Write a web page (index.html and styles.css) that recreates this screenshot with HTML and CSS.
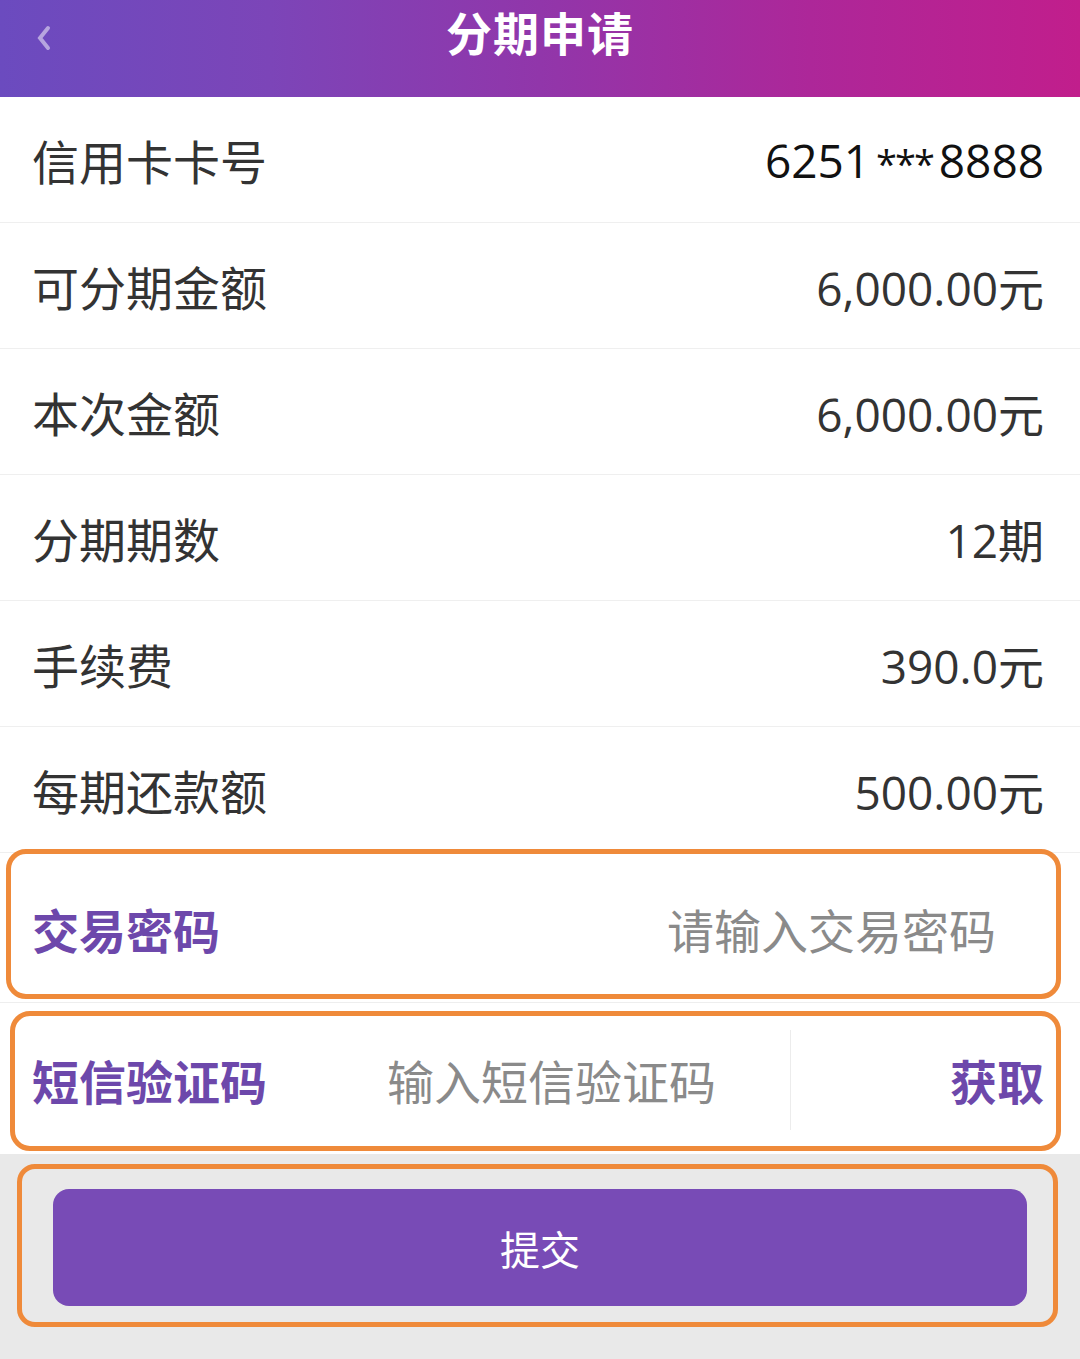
FILE: index.html
```html
<!DOCTYPE html>
<html lang="zh-CN">
<head>
<meta charset="utf-8">
<title>分期申请</title>
<link rel="stylesheet" href="styles.css">
</head>
<body>
<div class="page">
  <header class="topbar">
    <svg class="back" width="40" height="50" viewBox="0 0 40 50" aria-hidden="true">
      <path d="M22 22 L14 32 L22 42" fill="none" stroke="#ffffff" stroke-width="4" stroke-linecap="round" opacity="0.5"/>
    </svg>
    <h1 class="title">分期申请</h1>
  </header>

  <div class="row"><span class="label">信用卡卡号</span><span class="value dark">6251 <span class="stars">***</span> 8888</span></div>
  <div class="row"><span class="label">可分期金额</span><span class="value">6,000.00元</span></div>
  <div class="row"><span class="label">本次金额</span><span class="value">6,000.00元</span></div>
  <div class="row"><span class="label">分期期数</span><span class="value">12期</span></div>
  <div class="row"><span class="label">手续费</span><span class="value">390.0元</span></div>
  <div class="row"><span class="label">每期还款额</span><span class="value">500.00元</span></div>

  <div class="field pwd">
    <span class="flabel">交易密码</span>
    <span class="placeholder pwd-ph">请输入交易密码</span>
    <div class="mark mark-pwd"></div>
  </div>

  <div class="field sms">
    <span class="flabel">短信验证码</span>
    <span class="placeholder sms-ph">输入短信验证码</span>
    <span class="divider"></span>
    <span class="get">获取</span>
    <div class="mark mark-sms"></div>
  </div>

  <div class="footer">
    <button class="submit">提交</button>
    <div class="mark mark-btn"></div>
  </div>
</div>
</body>
</html>
```

FILE: styles.css
```css
html, body {
  margin: 0;
  padding: 0;
}
body {
  background: #e9e9e9;
  font-family: "Open Sans", "Noto Sans CJK SC", sans-serif;
}
.page {
  width: 1080px;
  height: 1359px;
  display: flex;
  flex-direction: column;
  background: #e9e9e9;
  overflow: hidden;
}
.topbar {
  position: relative;
  height: 97px;
  flex: none;
  background: linear-gradient(90deg, #6b4bbf 0%, #7c45b8 25%, #9136aa 50%, #ad2799 75%, #c11e8c 100%);
  display: flex;
  justify-content: center;
  align-items: flex-start;
}
.back {
  position: absolute;
  left: 26px;
  top: 6px;
}
.title {
  margin: 0;
  padding-top: 7px;
  font-family: "Noto Sans CJK SC", sans-serif;
  font-size: 46px;
  line-height: 48px;
  font-weight: 700;
  color: #ffffff;
  letter-spacing: 1px;
}
.row {
  height: 125px;
  flex: none;
  background: #ffffff;
  border-bottom: 1px solid #efefef;
  display: flex;
  justify-content: space-between;
  align-items: center;
  padding: 0 36px 0 32px;
}
.label {
  font-family: "Noto Sans CJK SC", sans-serif;
  font-size: 47px;
  color: #333333;
}
.value {
  font-family: "Open Sans", "Noto Sans CJK SC", sans-serif;
  font-size: 46px;
  color: #333333;
}
.value.dark {
  color: #111111;
  word-spacing: -6px;
}
.stars {
  font-size: 38px;
  letter-spacing: -2px;
}
.field {
  position: relative;
  flex: none;
  background: #ffffff;
  display: flex;
  align-items: center;
  padding: 0 36px 0 32px;
  font-family: "Noto Sans CJK SC", sans-serif;
  box-sizing: border-box;
}
.pwd {
  height: 150px;
  border-bottom: 1px solid #eeeeee;
  padding-top: 2px;
}
.sms {
  height: 151px;
  padding-top: 2px;
}
.flabel {
  font-size: 47px;
  font-weight: 700;
  color: #6d48ab;
}
.placeholder {
  font-size: 47px;
  color: #8a8a8a;
}
.pwd-ph {
  margin-left: auto;
  margin-right: 48px;
}
.sms-ph {
  margin-left: 120px;
}
.divider {
  width: 1px;
  height: 100px;
  background: #ececec;
  margin-left: 74px;
}
.get {
  margin-left: auto;
  font-size: 47px;
  font-weight: 700;
  color: #6d48ab;
}
.footer {
  position: relative;
  flex: 1;
  background: #e9e9e9;
  padding-top: 35px;
  padding-left: 53px;
}
.submit {
  display: block;
  width: 974px;
  height: 117px;
  border: none;
  border-radius: 16px;
  background: #784bb6;
  color: #ffffff;
  font-family: "Noto Sans CJK SC", sans-serif;
  font-size: 40px;
  padding: 0;
}
.mark {
  position: absolute;
  border: 5px solid #ef8a3a;
  border-radius: 20px;
  box-sizing: border-box;
  pointer-events: none;
}
.mark-pwd {
  left: 6px;
  top: -4px;
  width: 1055px;
  height: 150px;
}
.mark-sms {
  left: 10px;
  top: 8px;
  width: 1051px;
  height: 140px;
}
.mark-btn {
  left: 17px;
  top: 10px;
  width: 1041px;
  height: 163px;
  border-radius: 18px;
}
```
